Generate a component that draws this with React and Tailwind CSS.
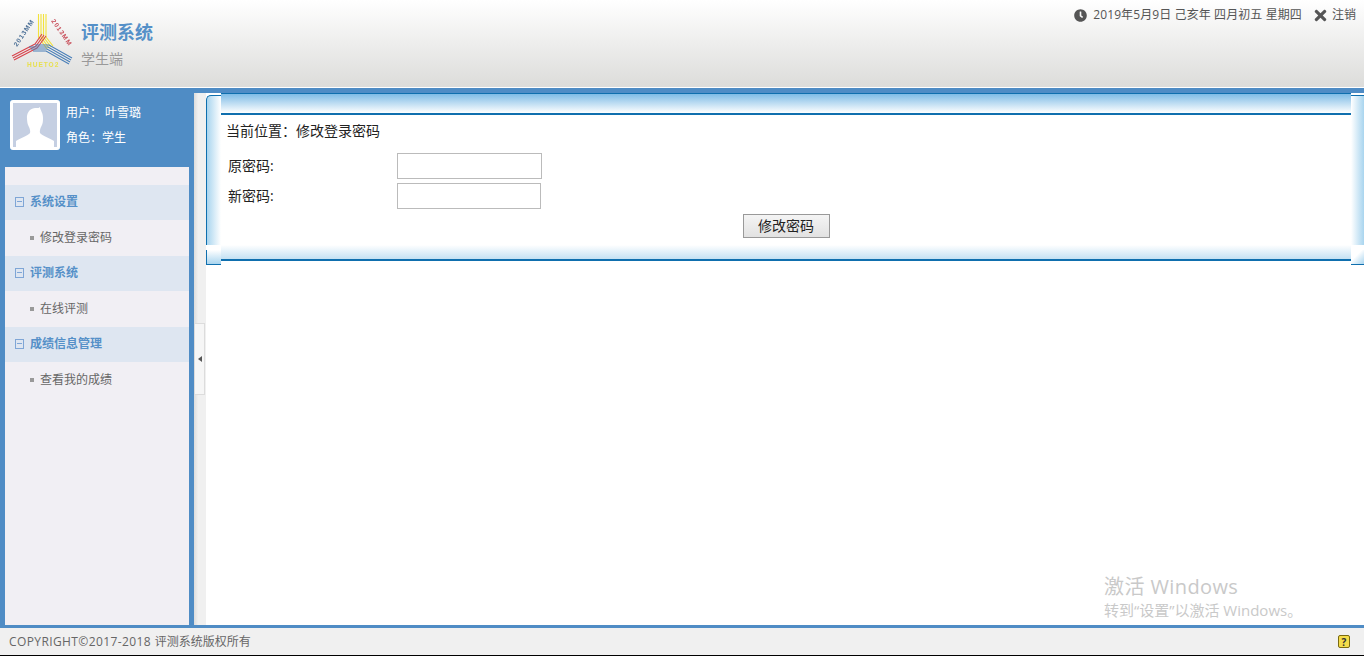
import { FaClock, FaTimes } from "react-icons/fa";

const font = { fontFamily: '"Open Sans", "Noto Sans CJK SC", sans-serif' };

const menu = [
  { title: "系统设置", item: "修改登录密码" },
  { title: "评测系统", item: "在线评测" },
  { title: "成绩信息管理", item: "查看我的成绩" },
];

function Logo() {
  return (
    <svg width="66" height="60" viewBox="0 0 66 60" className="shrink-0 blur-[0.4px]">
      <g fill="none" strokeWidth="1.1">
        <g stroke="#f2e23a">
          <path d="M27.500 3V26L36 38" />
          <path d="M30 3V26L38 37" />
          <path d="M32.500 3V26L40 36" />
          <path d="M35 3V26L42 35" />
        </g>
        <g stroke="#d8434c">
          <path d="M1 45L24 33L31 23" />
          <path d="M2 47L25 35L33 24" />
          <path d="M3 49L26 37L35 25" />
        </g>
        <g stroke="#4a7fb8">
          <path d="M60 49L37 36H18" />
          <path d="M59 51L36 38H20" />
          <path d="M58 53L35 40H22" />
          <path d="M61 47L38 34H24" />
        </g>
      </g>
      <g fontFamily="Liberation Sans, sans-serif" fontSize="6.5" fontWeight="700" letterSpacing="1">
        <text x="0" y="0" fill="#4b6f96" transform="translate(6 36) rotate(-56)">2013MM</text>
        <text x="0" y="0" fill="#c9525d" transform="translate(40 10) rotate(55)">2013MM</text>
        <text x="16" y="56" fill="#e8e050">HUETO2</text>
      </g>
    </svg>
  );
}

function Avatar() {
  return (
    <div className="h-[50px] w-[50px] shrink-0 rounded-[3px] border-[3px] border-white bg-[#c5cfe2]">
      <svg viewBox="0 0 44 44" className="h-full w-full">
        <path
          fill="#fff"
          d="M22 5C16 6 13.500 10 14 16C14.200 19 14.500 21 15.500 23C17 26 17.500 28 17 30C15 33 7 35 3 38V44H41V38C37 35 29 33 27 30C26.500 28 27 26 28.500 23C29.500 21 30 19 30 16C30.500 10 27 7 27 4C25.500 5.500 24 5 22 5Z"
        />
      </svg>
    </div>
  );
}

function Sidebar() {
  return (
    <aside className="flex w-[194px] shrink-0 flex-col bg-[#4f8cc5]">
      <div className="flex h-[79px] gap-[6px] pl-[10px] pt-[12px] text-xs text-white">
        <Avatar />
        <div>
          <div className="mt-[4px] h-[25px] leading-[18px]">用户：&nbsp;叶雪璐</div>
          <div className="leading-[18px]">角色：学生</div>
        </div>
      </div>
      <nav className="ml-[5px] w-[184px] flex-1 bg-[#f1eff4] pt-[18px] text-xs">
        {menu.map((group) => (
          <div key={group.title}>
            <div className="flex h-[35px] items-center bg-[#dee6f1] pb-[2px] pl-[10px] font-bold text-[#5590c8]">
              <span className="mr-[6px] flex h-[10px] w-[9px] items-center justify-center border border-[#7fa6d6]">
                <span className="h-px w-[5px] bg-[#7fa6d6]" />
              </span>
              {group.title}
            </div>
            <div className="flex h-[36px] items-center pl-[25px] text-[#666]">
              <span className="mr-[6px] h-1 w-1 bg-[#999]" />
              {group.item}
            </div>
          </div>
        ))}
      </nav>
    </aside>
  );
}

function Splitter() {
  return (
    <div className="flex w-[12px] shrink-0 items-center bg-[linear-gradient(to_right,#dcdcdc,#f0f0f0_35%)]">
      <div className="flex h-[72px] w-[11px] items-center justify-center border border-[#dcdcdc] bg-[#f6f6f6]">
        <span className="h-0 w-0 border-y-[3px] border-r-[4px] border-y-transparent border-r-[#555]" />
      </div>
    </div>
  );
}

function Panel() {
  return (
    <div className="flex h-[172px] bg-white">
      <div className="flex w-[15px] shrink-0 flex-col pt-[2px]">
        <div className="flex-1 rounded-tl-[5px] border-l border-t border-[#0f6fae] bg-[linear-gradient(to_right,#a9d5ef,#fff)]" />
        <div className="mt-[5px] h-[15px] border-b border-l border-[#0f6fae] bg-[linear-gradient(to_bottom,#fff,#a9d5ef)]" />
      </div>
      <div className="flex h-[168px] flex-1 flex-col">
        <div className="h-[22px] border-b-2 border-t border-[#0f6fae] bg-[linear-gradient(to_bottom,#7fbce6,#fff)]" />
        <div className="flex-1 text-sm text-[#222]">
          <div className="pl-[5px] pt-[6px] leading-[20px]">当前位置：修改登录密码</div>
          <div className="mt-[12px] flex h-[30px] items-start pl-[7px]">
            <label className="w-[169px] leading-[26px]">原密码:</label>
            <input className="h-[26px] w-[145px] border border-[#bbb] bg-white" />
          </div>
          <div className="flex h-[30px] items-start pl-[7px]">
            <label className="w-[169px] leading-[26px]">新密码:</label>
            <input className="h-[26px] w-[144px] border border-[#bbb] bg-white" />
          </div>
          <div className="mt-px flex justify-center">
            <button className="h-[24px] w-[87px] border border-[#999] bg-[linear-gradient(to_bottom,#f4f4f4,#e2e2e2)] text-sm leading-none text-[#222]">
              修改密码
            </button>
          </div>
        </div>
        <div className="h-[16px] border-b-2 border-[#0f6fae] bg-[linear-gradient(to_bottom,#fff,#c4e1f3)]" />
      </div>
      <div className="flex w-[13px] shrink-0 flex-col pt-[2px]">
        <div className="flex-1 border-t border-[#0f6fae] bg-[linear-gradient(to_right,#fff,#a9d5ef)]" />
        <div className="mt-[5px] h-[15px] border-b border-[#0f6fae] bg-[linear-gradient(135deg,#fff,#fff_40%,#a9d5ef)]" />
      </div>
    </div>
  );
}

export default function App() {
  return (
    <div style={font} className="relative flex h-screen flex-col overflow-hidden">
      <header className="flex h-[88px] shrink-0 border-b border-white bg-[linear-gradient(to_bottom,#fff,#dcdcda)]">
        <div className="ml-[11px] mt-[11px]">
          <Logo />
        </div>
        <div className="ml-[4px] pt-[19px]">
          <div className="text-lg font-bold leading-[26px] text-[#5590c8]">评测系统</div>
          <div className="mt-[4px] text-sm leading-[20px] text-[#999]">学生端</div>
        </div>
        <div className="ml-auto mr-[8px] flex h-[30px] items-center text-xs text-[#555]">
          <FaClock className="mr-[6px] size-[13px] text-[#555]" />
          <span className="tracking-[0.1px]">2019年5月9日 己亥年 四月初五 星期四</span>
          <FaTimes className="ml-[10px] mr-[3px] size-[17px] text-[#555]" />
          <span>注销</span>
        </div>
      </header>

      <div className="flex min-h-0 flex-1 bg-[#4f8cc5]">
        <Sidebar />
        <div className="mt-[5px] flex min-w-0 flex-1">
          <Splitter />
          <main className="min-w-0 flex-1 bg-white">
            <Panel />
          </main>
        </div>
      </div>

      <footer className="flex h-[31px] shrink-0 items-center justify-between border-b border-t-[3px] border-b-black border-t-[#4f8cc5] bg-[#f0f0f0] pl-[9px] pr-[14px] text-xs text-[#666]">
        <span>
          <span className="tracking-[0.4px]">COPYRIGHT©2017-2018 </span>评测系统版权所有
        </span>
        <span className="flex h-[13px] w-[12px] items-center justify-center rounded-[2px] border border-[#7a6a10] bg-[#f5dc4a] text-[10px] font-bold leading-none text-[#333]">
          ?
        </span>
      </footer>

      <div className="pointer-events-none absolute left-[1104px] top-[573px] text-[#c9c9c9]">
        <div className="text-[20px] leading-[28px] tracking-[0.4px]">激活 Windows</div>
        <div className="text-[15px] leading-[19px]">转到“设置”以激活 Windows。</div>
      </div>
    </div>
  );
}
